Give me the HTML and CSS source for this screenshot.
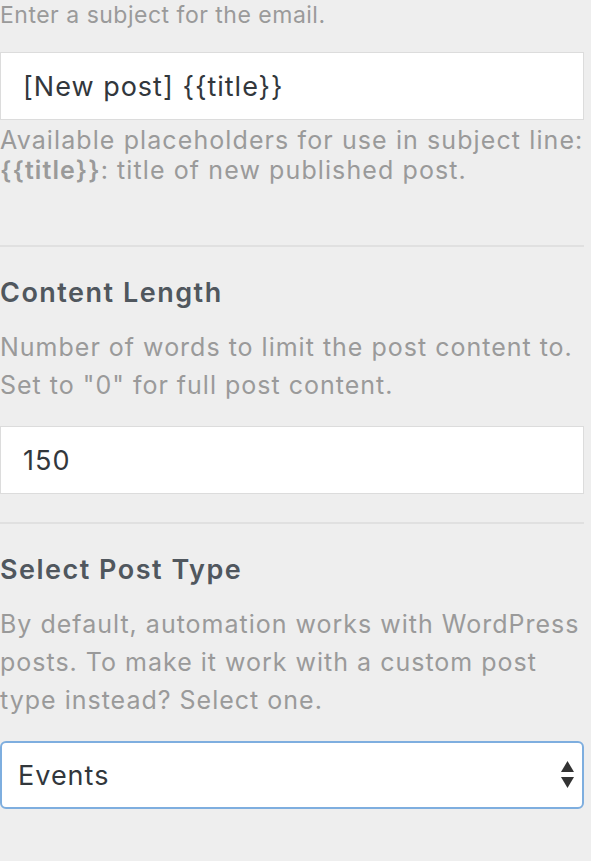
FILE: index.html
```html
<!DOCTYPE html>
<html lang="en">
<head>
    <meta charset="UTF-8">
    <meta name="viewport" content="width=device-width, initial-scale=1.0">
    <title>Email Settings</title>
    <link rel="stylesheet" href="styles.css">
</head>
<body>
    <div class="panel">
        <div class="field field-first">
            <p class="desc-top">Enter a subject for the email.</p>
            <input type="text" class="text-input" value="[New post] {{title}}">
            <p class="help">Available placeholders for use in subject line:<br><strong>{{title}}</strong>: title of new published post.</p>
        </div>

        <div class="field">
            <h3 class="field-title">Content Length</h3>
            <p class="desc">Number of words to limit the post content to.<br>Set to "0" for full post content.</p>
            <input type="text" class="text-input" value="150">
        </div>

        <div class="field">
            <h3 class="field-title">Select Post Type</h3>
            <p class="desc">By default, automation works with WordPress<br>posts. To make it work with a custom post<br>type instead? Select one.</p>
            <div class="select-wrap">
                <select class="select-input">
                    <option>Events</option>
                    <option>Posts</option>
                    <option>Pages</option>
                </select>
                <!-- up/down arrows drawn over the select -->
                <svg class="select-arrows" width="13" height="28" viewBox="0 0 13 28">
                    <path d="M6.5 0 L13 11 L0 11 Z" fill="#333"/>
                    <path d="M0 16 L13 16 L6.5 27 Z" fill="#333"/>
                </svg>
            </div>
        </div>
    </div>
</body>
</html>
```

FILE: styles.css
```css
body {
    margin: 0;
    padding: 0;
    background-color: #eeeeee;
    font-family: Inter, "Noto Sans", sans-serif;
    color: #32373c;
}
.panel {
    width: 584px;
}
.field {
    border-top: 2px solid #e0e0e0;
    padding: 31px 0 28px;
}
.field:last-child {
    padding-bottom: 26px;
}
.field-first {
    border-top: none;
    padding: 0 0 60px;
}
.field-title {
    margin: 0;
    font-size: 27px;
    line-height: 32px;
    font-weight: 600;
    letter-spacing: 1.5px;
    color: #50575e;
}
.field + .field .field-title {
    margin-top: -1px;
}
.desc {
    margin: 19px 0 0;
    font-size: 25px;
    line-height: 38px;
    letter-spacing: 1px;
    white-space: nowrap;
    color: #9a9a9a;
}
.desc-top {
    margin: 0;
    padding-top: 3px;
    font-size: 23px;
    line-height: 24px;
    letter-spacing: 0.5px;
    color: #9a9a9a;
}
.help {
    margin: 5px 0 0;
    font-size: 25px;
    line-height: 30px;
    letter-spacing: 1.1px;
    white-space: nowrap;
    color: #9a9a9a;
}
.help strong {
    font-weight: 600;
}
.text-input {
    display: block;
    box-sizing: border-box;
    width: 100%;
    height: 68px;
    margin-top: 22px;
    padding: 0 22px;
    border: 1px solid #dcdcdc;
    background-color: #fff;
    font-family: inherit;
    font-size: 27px;
    letter-spacing: 1px;
    color: #32373c;
    outline: none;
}
.field-first .text-input {
    margin-top: 25px;
}
.select-wrap {
    position: relative;
    margin-top: 22px;
}
.select-input {
    display: block;
    box-sizing: border-box;
    width: 100%;
    height: 68px;
    padding: 0 16px;
    border: 2px solid #7eaedf;
    border-radius: 6px;
    background-color: #fff;
    font-family: inherit;
    font-size: 27px;
    letter-spacing: 1px;
    color: #32373c;
    -webkit-appearance: none;
    appearance: none;
    outline: none;
}
.select-arrows {
    position: absolute;
    right: 10px;
    top: 20px;
    pointer-events: none;
}
```
